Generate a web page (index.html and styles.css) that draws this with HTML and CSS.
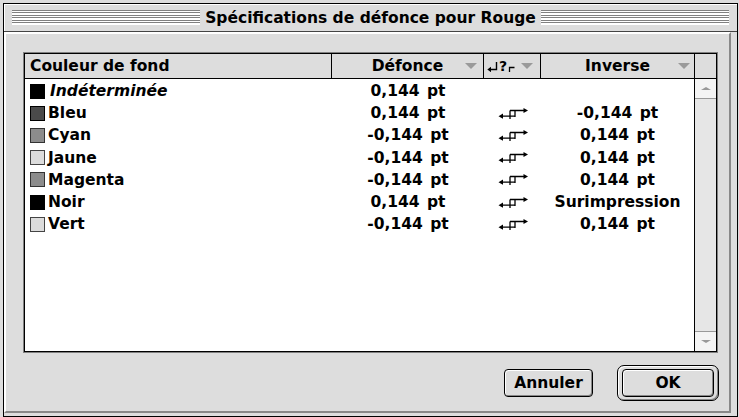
FILE: index.html
```html
<!DOCTYPE html>
<html lang="fr">
<head>
<meta charset="utf-8">
<title>Spécifications de défonce pour Rouge</title>
<link rel="stylesheet" href="styles.css">
</head>
<body>
<div class="window">
  <div class="titlebar">
    <div class="stripes"></div>
    <div class="title">Spécifications de défonce pour Rouge</div>
    <div class="stripes"></div>
  </div>
  <div class="content">
    <div class="list">
      <div class="header">
        <div class="hcell h-name">Couleur de fond</div>
        <div class="hcell h-sort"><span></span><span class="hlabel">Défonce</span><span class="tri tri-a"></span></div>
        <div class="hcell h-icon">
          <svg class="ret" width="11" height="12" viewBox="0 0 11 12"><path d="M9.5 2 V9.5 H3" fill="none" stroke="#000" stroke-width="1.4"/><polygon points="0.3,9.5 4,6.8 4,12.2" fill="#000"/></svg>
          <span class="q">?</span>
          <svg class="corner" width="7" height="12" viewBox="0 0 7 12"><path d="M1.5 12 V7.5 H6.5" fill="none" stroke="#000" stroke-width="1.3"/></svg>
          <span class="tri tri-b"></span>
        </div>
        <div class="hcell h-sort"><span></span><span class="hlabel">Inverse</span><span class="tri tri-c"></span></div>
        <div class="hcell h-scroll"></div>
      </div>
      <div class="body">
        <div class="rows">
          <div class="row">
            <div class="c-name"><span class="sw sw-black"></span><span class="nm it">Indéterminée</span></div>
            <div class="c-val">0,144 pt</div>
            <div class="c-ico"></div>
            <div class="c-val"></div>
          </div>
          <div class="row">
            <div class="c-name"><span class="sw sw-dark"></span><span class="nm">Bleu</span></div>
            <div class="c-val">0,144 pt</div>
            <div class="c-ico"><svg class="swap" width="30" height="11" viewBox="0 0 30 11"><path d="M4 8.2 H17.5 M12 2.5 V11 M17 2.5 V9 M12 2.5 H27" fill="none" stroke="#000" stroke-width="1.3"/><polygon points="0.5,8.2 5,5.6 5,10.8" fill="#000"/><polygon points="30,2.5 25.5,0 25.5,5" fill="#000"/></svg></div>
            <div class="c-val">-0,144 pt</div>
          </div>
          <div class="row">
            <div class="c-name"><span class="sw sw-mid"></span><span class="nm">Cyan</span></div>
            <div class="c-val">-0,144 pt</div>
            <div class="c-ico"><svg class="swap" width="30" height="11" viewBox="0 0 30 11"><path d="M4 8.2 H17.5 M12 2.5 V11 M17 2.5 V9 M12 2.5 H27" fill="none" stroke="#000" stroke-width="1.3"/><polygon points="0.5,8.2 5,5.6 5,10.8" fill="#000"/><polygon points="30,2.5 25.5,0 25.5,5" fill="#000"/></svg></div>
            <div class="c-val">0,144 pt</div>
          </div>
          <div class="row">
            <div class="c-name"><span class="sw sw-light"></span><span class="nm">Jaune</span></div>
            <div class="c-val">-0,144 pt</div>
            <div class="c-ico"><svg class="swap" width="30" height="11" viewBox="0 0 30 11"><path d="M4 8.2 H17.5 M12 2.5 V11 M17 2.5 V9 M12 2.5 H27" fill="none" stroke="#000" stroke-width="1.3"/><polygon points="0.5,8.2 5,5.6 5,10.8" fill="#000"/><polygon points="30,2.5 25.5,0 25.5,5" fill="#000"/></svg></div>
            <div class="c-val">0,144 pt</div>
          </div>
          <div class="row">
            <div class="c-name"><span class="sw sw-mid"></span><span class="nm">Magenta</span></div>
            <div class="c-val">-0,144 pt</div>
            <div class="c-ico"><svg class="swap" width="30" height="11" viewBox="0 0 30 11"><path d="M4 8.2 H17.5 M12 2.5 V11 M17 2.5 V9 M12 2.5 H27" fill="none" stroke="#000" stroke-width="1.3"/><polygon points="0.5,8.2 5,5.6 5,10.8" fill="#000"/><polygon points="30,2.5 25.5,0 25.5,5" fill="#000"/></svg></div>
            <div class="c-val">0,144 pt</div>
          </div>
          <div class="row">
            <div class="c-name"><span class="sw sw-black"></span><span class="nm">Noir</span></div>
            <div class="c-val">0,144 pt</div>
            <div class="c-ico"><svg class="swap" width="30" height="11" viewBox="0 0 30 11"><path d="M4 8.2 H17.5 M12 2.5 V11 M17 2.5 V9 M12 2.5 H27" fill="none" stroke="#000" stroke-width="1.3"/><polygon points="0.5,8.2 5,5.6 5,10.8" fill="#000"/><polygon points="30,2.5 25.5,0 25.5,5" fill="#000"/></svg></div>
            <div class="c-val">Surimpression</div>
          </div>
          <div class="row">
            <div class="c-name"><span class="sw sw-light"></span><span class="nm">Vert</span></div>
            <div class="c-val">-0,144 pt</div>
            <div class="c-ico"><svg class="swap" width="30" height="11" viewBox="0 0 30 11"><path d="M4 8.2 H17.5 M12 2.5 V11 M17 2.5 V9 M12 2.5 H27" fill="none" stroke="#000" stroke-width="1.3"/><polygon points="0.5,8.2 5,5.6 5,10.8" fill="#000"/><polygon points="30,2.5 25.5,0 25.5,5" fill="#000"/></svg></div>
            <div class="c-val">0,144 pt</div>
          </div>
        </div>
        <div class="scrollbar">
          <div class="arrow arrow-up"><span class="atri-up"></span></div>
          <div class="track"></div>
          <div class="arrow arrow-down"><span class="atri-down"></span></div>
        </div>
      </div>
    </div>
    <div class="buttons">
      <div class="btn btn-cancel">Annuler</div>
      <div class="ring"><div class="btn btn-ok">OK</div></div>
    </div>
  </div>
</div>
</body>
</html>
```

FILE: styles.css
```css
* { box-sizing: border-box; }
body {
  margin: 0;
  background: #dddddd;
  font-family: "DejaVu Sans", "Liberation Sans", sans-serif;
  font-weight: bold;
  font-size: 15.5px;
  color: #000;
}
.window {
  margin: 3px 0 0 3px;
  width: 735px;
  height: 414px;
  border: 1px solid #000;
  background: #dddddd;
  display: flex;
  flex-direction: column;
}
.titlebar {
  height: 28px;
  border-bottom: 1px solid #444;
  display: flex;
  align-items: center;
  padding: 0 8px;
  box-shadow: inset 1px 1px 0 #fff;
}
.stripes {
  flex: 1;
  height: 15px;
  background: repeating-linear-gradient(to bottom, #808080 0, #808080 1px, #ffffff 1px, #ffffff 2.5px);
}
.title {
  padding: 0 5px;
  white-space: nowrap;
  line-height: 20px;
}
.content {
  flex: 1;
  margin: 0 6px 3px 0;
  border-top: 2px solid #fff;
  border-left: 2px solid #fff;
  border-right: 2px solid #888;
  border-bottom: 2px solid #888;
  padding: 19px 0 0 18px;
}
.list {
  width: 693px;
  height: 299px;
  border: 1px solid #000;
  box-shadow: 0 0 0 1px #808080;
  background: #fff;
  display: flex;
  flex-direction: column;
}
.header {
  height: 25px;
  border-bottom: 1px solid #000;
  background: #dddddd;
  display: grid;
  grid-template-columns: 307px 152px 57px 154px 21px;
}
.hcell {
  border-right: 1px solid #000;
  display: flex;
  align-items: center;
}
.h-name { padding-left: 5px; }
.h-sort {
  display: grid;
  grid-template-columns: 1fr auto 1fr;
  align-items: center;
}
.h-sort .tri { justify-self: end; }
.tri {
  width: 0;
  height: 0;
  border-left: 6px solid transparent;
  border-right: 6px solid transparent;
  border-top: 6px solid #9a9a9a;
}
.tri-a { margin-right: 6px; }
.tri-c { margin-right: 4px; }
.h-icon { padding-left: 3px; }
.h-icon .ret { display: block; }
.h-icon .q { font-size: 14px; margin-left: 1px; line-height: 14px; }
.h-icon .corner { display: block; margin-left: 1px; }
.tri-b { margin-left: auto; margin-right: 7px; }
.h-scroll { border-right: none; }
.body {
  flex: 1;
  display: grid;
  grid-template-columns: 669px 22px;
}
.rows { padding-top: 1px; }
.row {
  height: 22.2px;
  display: grid;
  grid-template-columns: 307px 152px 57px 153px;
  align-items: center;
}
.c-name {
  display: flex;
  align-items: center;
  padding-left: 5px;
}
.sw {
  width: 15px;
  height: 15px;
  border: 1px solid #000;
  margin-right: 3px;
}
.sw-black { background: #000; }
.sw-dark { background: #4a4a4a; }
.sw-mid { background: #8c8c8c; border-color: #333; }
.sw-light { background: #dcdcdc; border-color: #444; }
.nm { white-space: nowrap; }
.it { font-style: italic; margin-left: 2px; }
.c-val {
  text-align: center;
  white-space: nowrap;
  word-spacing: 2px;
}
.c-ico {
  display: flex;
  justify-content: center;
  align-items: center;
}
.swap { display: block; }
.scrollbar {
  border-left: 1px solid #000;
  display: flex;
  flex-direction: column;
  background: #e6e6e6;
}
.arrow {
  height: 20px;
  background: #f4f4f4;
  display: flex;
  align-items: center;
  justify-content: center;
}
.arrow-up { border-bottom: 1px solid #999; }
.arrow-down { border-top: 1px solid #999; }
.track { flex: 1; }
.atri-up {
  width: 0; height: 0;
  border-left: 5px solid transparent;
  border-right: 5px solid transparent;
  border-bottom: 3px solid #999;
}
.atri-down {
  width: 0; height: 0;
  border-left: 5px solid transparent;
  border-right: 5px solid transparent;
  border-top: 3px solid #999;
}
.buttons {
  width: 695px;
  margin-top: 13px;
  display: flex;
  justify-content: flex-end;
  align-items: center;
  gap: 24px;
}
.btn {
  height: 28px;
  border: 1px solid #000;
  border-radius: 4px;
  background: #dddddd;
  box-shadow: inset 1px 1px 0 #fff, inset -1px -1px 0 #888;
  display: flex;
  align-items: center;
  justify-content: center;
}
.btn-cancel { width: 89px; }
.btn-ok { width: 92px; }
.ring {
  border: 1px solid #000;
  border-radius: 7px;
  padding: 3px 4px;
  background: #dddddd;
  box-shadow: inset 1px 1px 0 #fff, inset -1px -1px 0 #888;
}
```
